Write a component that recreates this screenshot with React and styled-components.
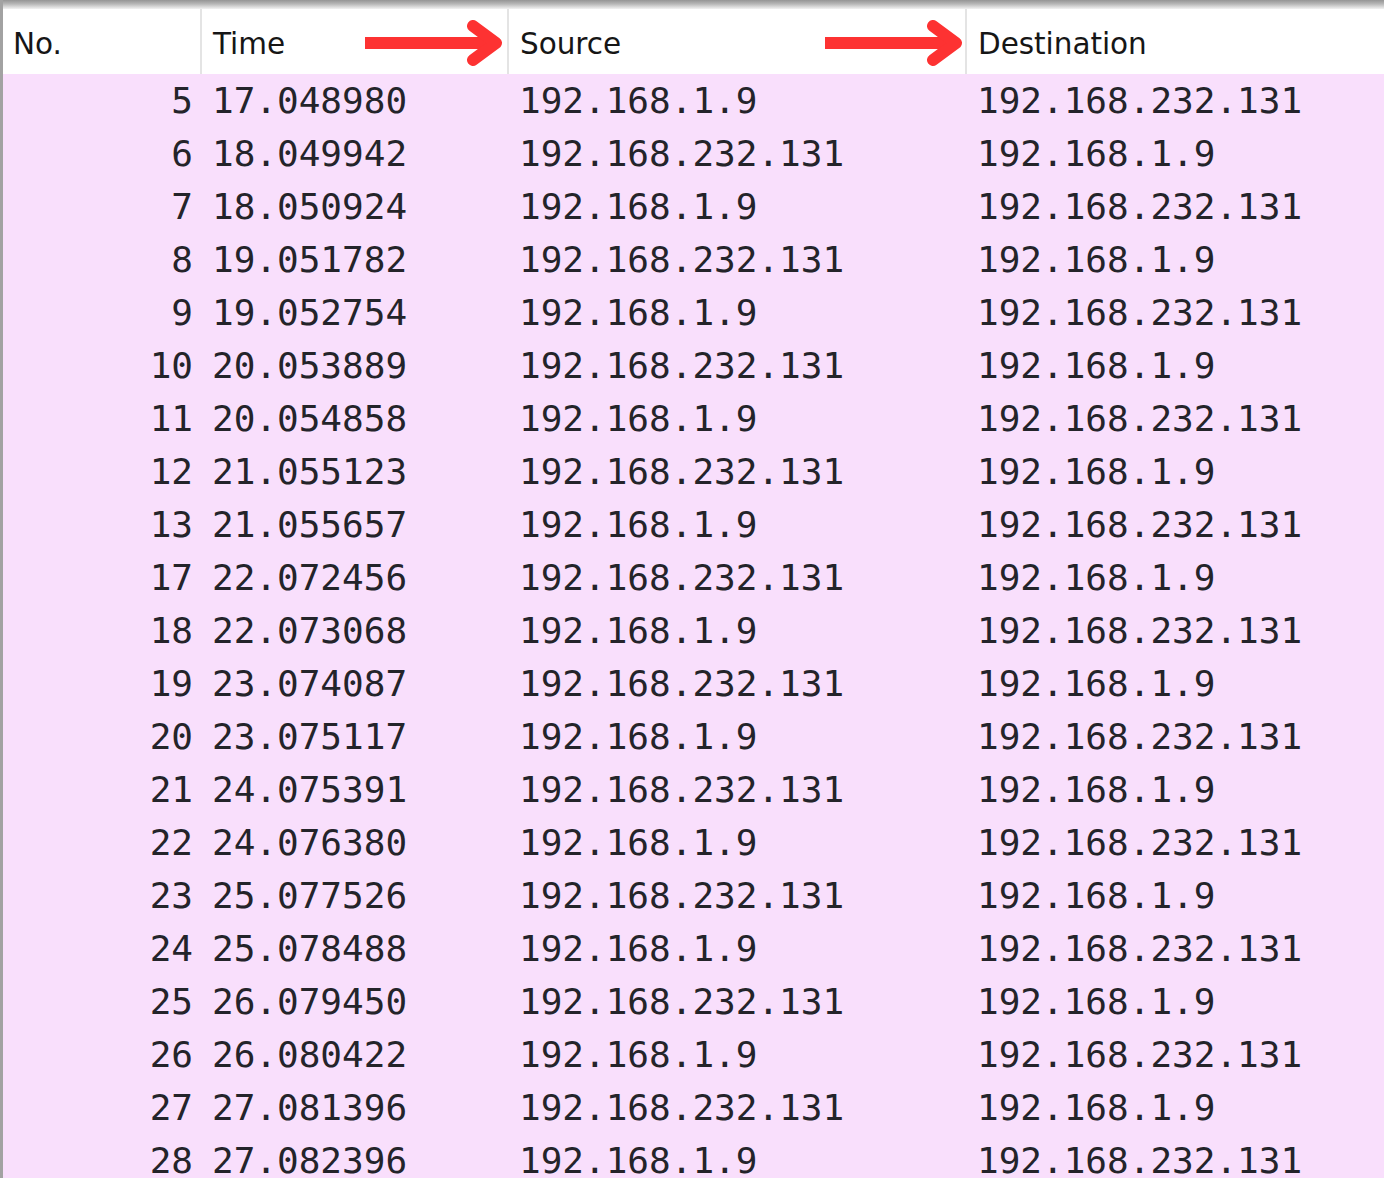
import React from "react";
import styled, { createGlobalStyle } from "styled-components";

const GlobalStyle = createGlobalStyle`
  html, body {
    margin: 0;
    padding: 0;
    background: #ffffff;
  }
`;

const COLUMNS = "199px 307px 458px 1fr";

const Frame = styled.div`
  height: 100vh;
  overflow: hidden;
  border-left: 3px solid #a2a2a2;
  display: flex;
  flex-direction: column;
  background: #f9dffc;
`;

const TopEdge = styled.div`
  height: 9px;
  flex: none;
  background: linear-gradient(#959595, #b8b8b8 45%, #dedede 80%, #f2f2f2);
`;

const Header = styled.div`
  display: grid;
  grid-template-columns: ${COLUMNS};
  height: 65px;
  flex: none;
  background: #ffffff;
`;

const HeadCell = styled.div`
  display: flex;
  align-items: center;
  padding: 5px 0 0 ${(p) => p.$pad || 11}px;
  border-right: ${(p) => (p.$last ? "none" : "2px solid #e4e4e4")};
  font-family: "DejaVu Sans", Verdana, sans-serif;
  font-size: 29.5px;
  letter-spacing: -0.05px;
  color: #161616;
  white-space: nowrap;
`;

const Arrow = styled.svg`
  margin-left: auto;
  margin-right: ${(p) => p.$right}px;
  margin-top: -2px;
  flex: none;
`;

const Body = styled.div`
  display: flex;
  flex-direction: column;
`;

const Row = styled.div`
  display: grid;
  grid-template-columns: ${COLUMNS};
  height: 53px;
  align-items: center;
  font-family: "DejaVu Sans Mono", "Liberation Mono", monospace;
  font-size: 36px;
  color: #24242a;
  white-space: nowrap;
`;

const Cell = styled.div`
  padding: 0 ${(p) => (p.$num ? "9px" : "0")} 0 ${(p) => (p.$num ? "0" : "10px")};
  text-align: ${(p) => (p.$num ? "right" : "left")};
  overflow: hidden;
`;

const RedArrow = ({ right }) => (
  <Arrow $right={right} width="138" height="48" viewBox="0 0 138 48">
    <path d="M0 24 H128" stroke="#fd3232" strokeWidth="12" fill="none" />
    <path
      d="M108 7 L131 24 L108 41"
      stroke="#fd3232"
      strokeWidth="12"
      fill="none"
      strokeLinecap="round"
      strokeLinejoin="round"
    />
  </Arrow>
);

const packets = [
  [5, "17.048980"],
  [6, "18.049942"],
  [7, "18.050924"],
  [8, "19.051782"],
  [9, "19.052754"],
  [10, "20.053889"],
  [11, "20.054858"],
  [12, "21.055123"],
  [13, "21.055657"],
  [17, "22.072456"],
  [18, "22.073068"],
  [19, "23.074087"],
  [20, "23.075117"],
  [21, "24.075391"],
  [22, "24.076380"],
  [23, "25.077526"],
  [24, "25.078488"],
  [25, "26.079450"],
  [26, "26.080422"],
  [27, "27.081396"],
  [28, "27.082396"],
];

const HOST = "192.168.1.9";
const PEER = "192.168.232.131";

export default () => {
  return (
    <>
      <GlobalStyle />
      <Frame>
        <TopEdge />
        <Header>
          <HeadCell $pad={10}>No.</HeadCell>
          <HeadCell>
            Time
            <RedArrow right={4} />
          </HeadCell>
          <HeadCell>
            Source
            <RedArrow right={2} />
          </HeadCell>
          <HeadCell $last>Destination</HeadCell>
        </Header>
        <Body>
          {packets.map(([no, time], i) => (
            <Row key={no}>
              <Cell $num>{no}</Cell>
              <Cell>{time}</Cell>
              <Cell>{i % 2 === 0 ? HOST : PEER}</Cell>
              <Cell>{i % 2 === 0 ? PEER : HOST}</Cell>
            </Row>
          ))}
        </Body>
      </Frame>
    </>
  );
};
